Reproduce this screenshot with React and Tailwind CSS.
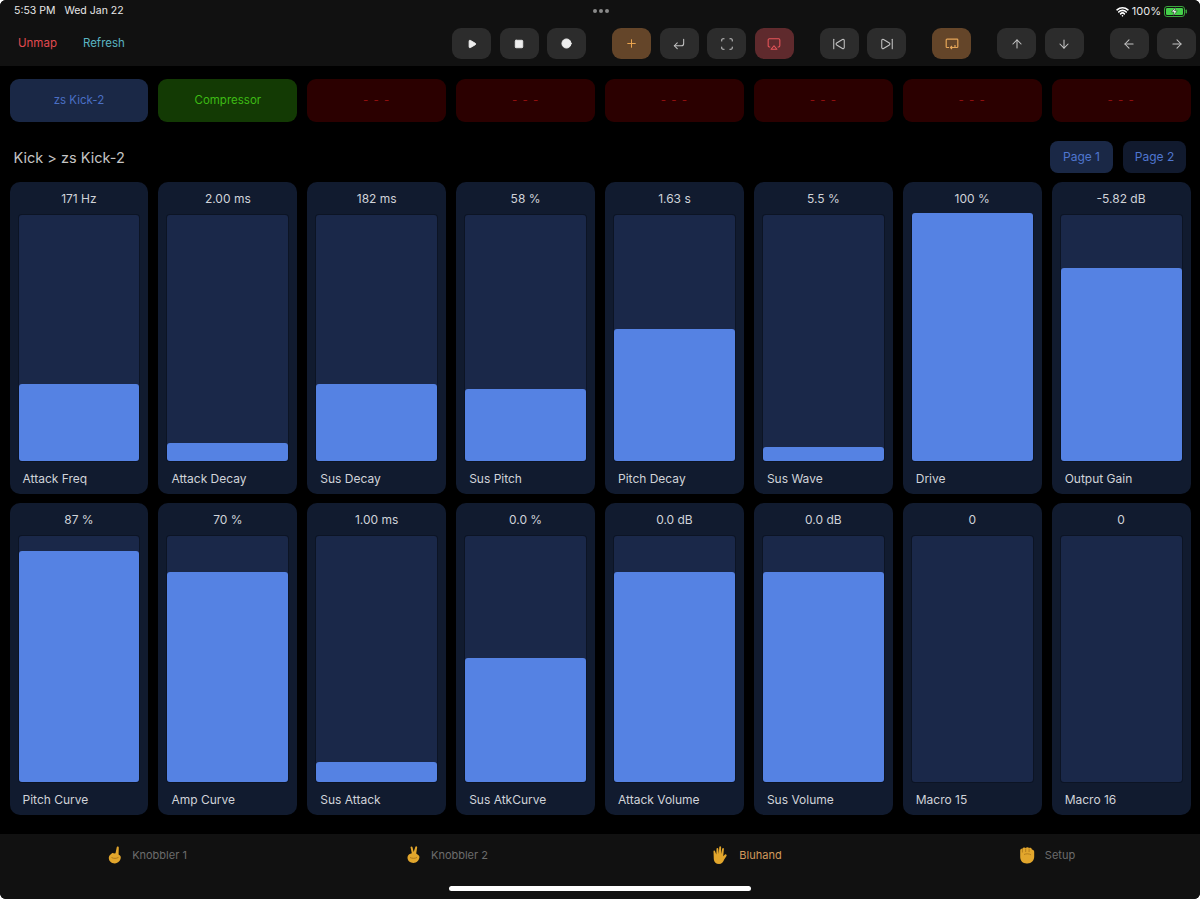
import { Play, Square, Circle, Plus, CornerDownLeft, Scan, Airplay, SkipBack, SkipForward, ArrowUp, ArrowDown, ArrowLeft, ArrowRight, Wifi } from 'lucide-react'

const ROW_ONE = [
  { value: '171 Hz', label: 'Attack Freq', fill: 77 },
  { value: '2.00 ms', label: 'Attack Decay', fill: 18 },
  { value: '182 ms', label: 'Sus Decay', fill: 77 },
  { value: '58 %', label: 'Sus Pitch', fill: 72 },
  { value: '1.63 s', label: 'Pitch Decay', fill: 132 },
  { value: '5.5 %', label: 'Sus Wave', fill: 14 },
  { value: '100 %', label: 'Drive', fill: 248 },
  { value: '-5.82 dB', label: 'Output Gain', fill: 193 },
]

const ROW_TWO = [
  { value: '87 %', label: 'Pitch Curve', fill: 231 },
  { value: '70 %', label: 'Amp Curve', fill: 210 },
  { value: '1.00 ms', label: 'Sus Attack', fill: 20 },
  { value: '0.0 %', label: 'Sus AtkCurve', fill: 124 },
  { value: '0.0 dB', label: 'Attack Volume', fill: 210 },
  { value: '0.0 dB', label: 'Sus Volume', fill: 210 },
  { value: '0', label: 'Macro 15', fill: 0 },
  { value: '0', label: 'Macro 16', fill: 0 },
]

function LoopScreen() {
  return (
    <svg width="14" height="14" viewBox="0 0 14 14" fill="none" stroke="#e5a558" strokeWidth="1.2">
      <path d="M4 10.500H2a.8.8 0 0 1-.8-.8V3a.8.8 0 0 1 .8-.8h10a.8.8 0 0 1 .8.8v6.700a.8.8 0 0 1-.8.8H6" />
      <path d="M10 8v2.500H5.500M7 9l-1.500 1.500L7 12" />
    </svg>
  )
}

function ToolButton({ tone = 'bg-[#2c2c2c]', children }) {
  return (
    <div className={`flex h-[31px] w-[39px] items-center justify-center rounded-[9px] ${tone}`}>
      {children}
    </div>
  )
}

function Toolbar() {
  const grey = { size: 14, color: '#c4c4c4', strokeWidth: 1.8 }
  return (
    <div className="flex h-[44px] items-start justify-between pl-[18px] pr-[4px] pt-[6px]">
      <div className="flex h-[31px] items-center gap-[26px] pt-[1px] text-[11.500px]">
        <span className="text-[#e04a50]">Unmap</span>
        <span className="text-[#5ab4c2]">Refresh</span>
      </div>
      <div className="flex gap-[26px]">
        <div className="flex gap-[8.500px]">
          <ToolButton><Play size={10} fill="#eee" color="#eee" /></ToolButton>
          <ToolButton><Square size={10} fill="#eee" color="#eee" /></ToolButton>
          <ToolButton><Circle size={11} fill="#eee" color="#eee" /></ToolButton>
        </div>
        <div className="flex gap-[8.500px]">
          <ToolButton tone="bg-[#644529]"><Plus size={13} color="#eda64f" strokeWidth={1.8} /></ToolButton>
          <ToolButton><CornerDownLeft {...grey} /></ToolButton>
          <ToolButton><Scan {...grey} /></ToolButton>
          <ToolButton tone="bg-[#5f2a2d]"><Airplay size={14} color="#e8555a" strokeWidth={1.8} /></ToolButton>
        </div>
        <div className="flex gap-[8.500px]">
          <ToolButton><SkipBack {...grey} /></ToolButton>
          <ToolButton><SkipForward {...grey} /></ToolButton>
        </div>
        <ToolButton tone="bg-[#644529]"><LoopScreen /></ToolButton>
        <div className="flex gap-[8.500px]">
          <ToolButton><ArrowUp {...grey} /></ToolButton>
          <ToolButton><ArrowDown {...grey} /></ToolButton>
        </div>
        <div className="flex gap-[8.500px]">
          <ToolButton><ArrowLeft {...grey} /></ToolButton>
          <ToolButton><ArrowRight {...grey} /></ToolButton>
        </div>
      </div>
    </div>
  )
}

function StatusBar() {
  return (
    <div className="flex h-[22px] items-center justify-between pl-[14px] pr-[13px] text-[11px] text-[#e8e8e8]">
      <div className="flex w-[300px] gap-[9px] text-[10.500px]">
        <span>5:53 PM</span>
        <span>Wed Jan 22</span>
      </div>
      <div className="flex gap-[2px]">
        <span className="h-[4px] w-[4px] rounded-full bg-[#8a8a8a]" />
        <span className="h-[4px] w-[4px] rounded-full bg-[#8a8a8a]" />
        <span className="h-[4px] w-[4px] rounded-full bg-[#8a8a8a]" />
      </div>
      <div className="flex w-[300px] items-center justify-end gap-[3px]">
        <Wifi size={13} color="#fff" strokeWidth={3} />
        <span>100%</span>
        <svg width="23" height="11" viewBox="0 0 23 11">
          <rect x="0.500" y="0.500" width="20" height="10" rx="2.500" fill="none" stroke="#3aa53d" />
          <rect x="2" y="2" width="17" height="7" rx="1.200" fill="#45d04a" />
          <rect x="21.500" y="3.500" width="1.500" height="4" rx="0.700" fill="#3aa53d" />
          <path d="M11.500 1 7.500 6h2.500l-1 4 4.200-5.200h-2.500z" fill="#fff" stroke="#111" strokeWidth="0.500" />
        </svg>
      </div>
    </div>
  )
}

function DeviceTab({ tone, children }) {
  return (
    <div className={`flex h-[43px] items-center justify-center rounded-[9px] pt-[1px] text-[11.500px] ${tone}`}>{children}</div>
  )
}

function Fader({ value, label, fill }) {
  return (
    <div className="flex h-[312px] flex-col rounded-[10px] bg-[#111b2f] px-[9px]">
      <div className="flex h-[33px] items-center justify-center text-[12px] text-[#d0d3d9]">{value}</div>
      <div className="flex h-[246px] flex-col justify-end rounded-[3px] bg-[#1a2849] shadow-[0_0_0_1px_#0c1424]">
        {fill > 0 && (
          <div className="shrink-0 rounded-[3px] bg-[#5582e3]" style={{ height: fill }} />
        )}
      </div>
      <div className="flex h-[33px] items-center pl-[4px] pt-[2px] text-[12px] text-[#d0d3d9]">{label}</div>
    </div>
  )
}

function PointingHand() {
  return (
    <svg width="15" height="18" viewBox="0 0 15 18">
      <path d="M9.800.900c.7-.9 2-.5 2 .7l-.2 7 1.400 1c.6.500.9 1.200.8 2-.3 3.200-2.500 5.800-6 5.800-3.600 0-6-2.200-6-5.300 0-1.600.6-2.800 1.700-3.600L5 7.300c.6-.4 1.300-.3 1.800.1l1.700-.2z" fill="#e2a62c" />
      <path d="M4.500 11.500c2.200 1.200 4.800 1.200 7-.1" stroke="#a8741a" strokeWidth="0.900" fill="none" />
    </svg>
  )
}

function VictoryHand() {
  return (
    <svg width="15" height="18" viewBox="0 0 15 18">
      <path d="M4.500 1c.5-.9 1.800-.7 2 .3L7.700 6l1.600-5.100c.3-1 1.800-.8 1.900.3l-1 6.300 2.300 1.700c.7.500 1 1.300.9 2.100-.4 3.300-2.600 5.700-6 5.700-3.400 0-5.900-2.100-5.900-5.200 0-1.500.6-2.800 1.700-3.500l2.600-1z" fill="#e2a62c" />
      <path d="M4 11.500c2.200 1.100 4.800 1.100 7 0" stroke="#a8741a" strokeWidth="0.900" fill="none" />
    </svg>
  )
}

function RaisedHand() {
  return (
    <svg width="17" height="18" viewBox="0 0 17 18">
      <path d="M1.500 5.500C1.400 4.500 2.800 4.200 3.100 5.200L4.300 8.500 4.500 2.800c0-1.100 1.700-1.200 1.800 0L6.700 8 7.300 1.100C7.400 0 9 0 9.100 1.100l-.1 7 1.200-5.400c.2-1 1.800-.8 1.700.3l-.7 7.300 1.500-1.600c.9-1 2.500.1 1.800 1.300l-2.300 3.500c-.9 2.700-2.600 4.500-5.200 4.500-3 0-4.900-1.800-5.200-4.700z" fill="#e2a62c" />
    </svg>
  )
}

function RaisedFist() {
  return (
    <svg width="16" height="18" viewBox="0 0 16 18">
      <path d="M1.200 4.400C1.200 3.200 2.300 2.500 3.400 2.800 4 1.300 5.700 1 6.700 2 7.500.8 9.400.9 10.100 2c1.200-.6 2.700.100 2.800 1.400 1.300 0 2.300 1 2.300 2.300v4.800c0 4-2.700 7-6.700 7h-1C3.900 17.500 1.200 14.700 1.200 11z" fill="#e2a62c" />
      <path d="M6.700 2.500v3.500M10.100 2.500v3.500M3.400 3v3.500M5 8.500c2.300-1 5-.9 7 .3" stroke="#a8741a" strokeWidth="0.800" fill="none" />
    </svg>
  )
}

function BottomTab({ icon, label, active }) {
  return (
    <div className="flex items-center justify-center gap-[10px] pr-[6px]">
      {icon}
      <span className={`text-[11px] ${active ? 'text-[#d29a5c]' : 'text-[#6c6c6c]'}`}>{label}</span>
    </div>
  )
}

export default function App() {
  return (
    <div className="relative flex h-[899px] w-[1200px] flex-col overflow-hidden rounded-[6px] bg-black font-['Inter',sans-serif]">

      {/* top bars */}
      <header className="h-[66px] shrink-0 bg-[#111111]">
        <StatusBar />
        <Toolbar />
      </header>

      <main className="flex flex-1 flex-col px-[9.500px] pt-[13px]">
        <div className="grid grid-cols-8 gap-[10px]">
          <DeviceTab tone="bg-[#1a2846] text-[#4a6fc4]">zs Kick-2</DeviceTab>
          <DeviceTab tone="bg-[#133a04] text-[#3dbb14]">Compressor</DeviceTab>
          {[3, 4, 5, 6, 7, 8].map((slot) => (
            <DeviceTab key={slot} tone="bg-[#2b0000] tracking-[1px] text-[#900f0f]">- - -</DeviceTab>
          ))}
        </div>

        {/* breadcrumb + pages */}
        <div className="flex h-[60px] items-center justify-between pl-[4px] pr-[4.500px] pt-[9px]">
          <span className="mt-[2px] text-[14.500px] text-[#c4c4c4]">Kick &gt; zs Kick-2</span>
          <div className="flex gap-[10px]">
            <div className="flex h-[32px] w-[63px] items-center justify-center rounded-[8px] bg-[#1a2846] text-[12px] text-[#4f76cf]">Page 1</div>
            <div className="flex h-[32px] w-[63px] items-center justify-center rounded-[8px] bg-[#111a2e] text-[12px] text-[#4f76cf]">Page 2</div>
          </div>
        </div>

        <div className="grid grid-cols-8 gap-x-[10px] gap-y-[9px]">
          {[...ROW_ONE, ...ROW_TWO].map((f) => (
            <Fader key={f.label} {...f} />
          ))}
        </div>
      </main>

      {/* bottom nav */}
      <nav className="grid h-[65px] shrink-0 grid-cols-4 items-start bg-[#111111] pt-[12px]">
        <BottomTab icon={<PointingHand />} label="Knobbler 1" />
        <BottomTab icon={<VictoryHand />} label="Knobbler 2" />
        <BottomTab icon={<RaisedHand />} label="Bluhand" active />
        <BottomTab icon={<RaisedFist />} label="Setup" />
      </nav>

      <div className="absolute bottom-[8px] left-[449px] h-[5px] w-[302px] rounded-full bg-white" />
    </div>
  )
}
